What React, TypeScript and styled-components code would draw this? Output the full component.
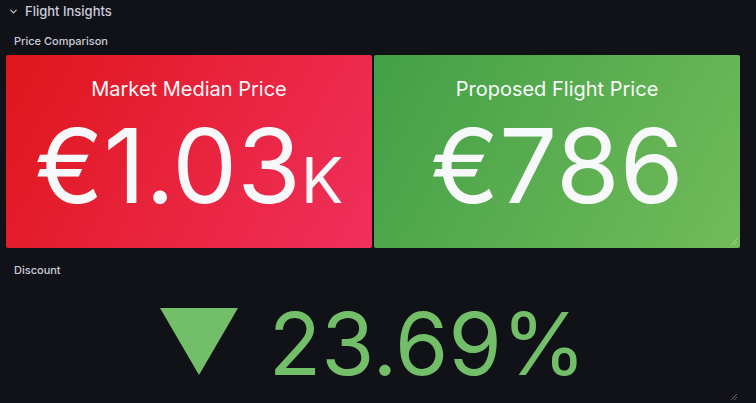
import React from "react";
import styled, { createGlobalStyle } from "styled-components";
import { ChevronDown } from "lucide-react";

const GlobalStyle = createGlobalStyle`
  html, body {
    margin: 0;
    padding: 0;
    background: #111217;
    font-family: Inter, "Noto Sans", sans-serif;
    overflow: hidden;
  }
`;

const Page = styled.div`
  width: 756px;
  height: 403px;
  display: flex;
  flex-direction: column;
  background: #111217;
  color: #ccccdc;
`;

const RowHeader = styled.div`
  height: 22px;
  margin-bottom: 5px;
  display: flex;
  align-items: center;
  gap: 6px;
  padding-left: 8px;
  font-size: 13px;
  font-weight: 500;
  color: #ccccdc;
`;

const Panel = styled.section`
  margin: 0 16px 0 6px;
  display: flex;
  flex-direction: column;
`;

const PanelTitle = styled.div`
  height: 28px;
  padding-left: 8px;
  display: flex;
  align-items: center;
  font-size: 11px;
  font-weight: 500;
  color: #ccccdc;
`;

const StatGrid = styled.div`
  display: grid;
  grid-template-columns: 1fr 1fr;
  gap: 2px;
  height: 193px;
`;

type CellProps = { $from: string; $to: string };

const StatCell = styled.div<CellProps>`
  position: relative;
  display: flex;
  flex-direction: column;
  align-items: center;
  padding-top: 22px;
  border-radius: 2px;
  background: linear-gradient(120deg, ${p => p.$from}, ${p => p.$to});
  color: #f7f8fa;
`;

const StatLabel = styled.div`
  font-size: 20px;
  line-height: 24px;
`;

const StatValue = styled.div`
  margin-top: 13px;
  font-size: 103px;
  line-height: 103px;
  white-space: nowrap;
`;

const Suffix = styled.span`
  font-size: 63px;
`;

const ResizeHandle = styled.svg`
  position: absolute;
  right: 2px;
  bottom: 2px;
`;

const DiscountPanel = styled(Panel)`
  margin-top: 8px;
  flex: 1;
`;

const DiscountBody = styled.div`
  position: relative;
  flex: 1;
  display: flex;
  justify-content: center;
  align-items: flex-start;
  gap: 31px;
  padding-top: 17px;
  color: #73bf69;
`;

const Arrow = styled.svg`
  margin-top: 7px;
  flex-shrink: 0;
`;

const DiscountValue = styled.div`
  font-size: 86px;
  line-height: 86px;
  white-space: nowrap;
`;

function Handle() {
  return (
    <ResizeHandle width="10" height="10" viewBox="0 0 10 10">
      <path d="M9 3 L3 9 M9 6 L6 9" stroke="rgba(255,255,255,0.35)" strokeWidth="1" />
    </ResizeHandle>
  );
}

export default function App() {
  return (
    <>
      <GlobalStyle />
      <Page>
        <RowHeader>
          <ChevronDown size={11} strokeWidth={2.5} />
          <span>Flight Insights</span>
        </RowHeader>
        <Panel>
          <PanelTitle>Price Comparison</PanelTitle>
          <StatGrid>
            <StatCell $from="#e0161b" $to="#f0305d">
              <StatLabel>Market Median Price</StatLabel>
              <StatValue>
                €1.03<Suffix>K</Suffix>
              </StatValue>
            </StatCell>
            <StatCell $from="#43a046" $to="#71bb5a">
              <StatLabel>Proposed Flight Price</StatLabel>
              <StatValue>€786</StatValue>
              <Handle />
            </StatCell>
          </StatGrid>
        </Panel>
        <DiscountPanel>
          <PanelTitle>Discount</PanelTitle>
          <DiscountBody>
            <Arrow width="78" height="67" viewBox="0 0 78 67">
              <polygon points="0,0 78,0 39,67" fill="#73bf69" />
            </Arrow>
            <DiscountValue>23.69%</DiscountValue>
            <Handle />
          </DiscountBody>
        </DiscountPanel>
      </Page>
    </>
  );
}
